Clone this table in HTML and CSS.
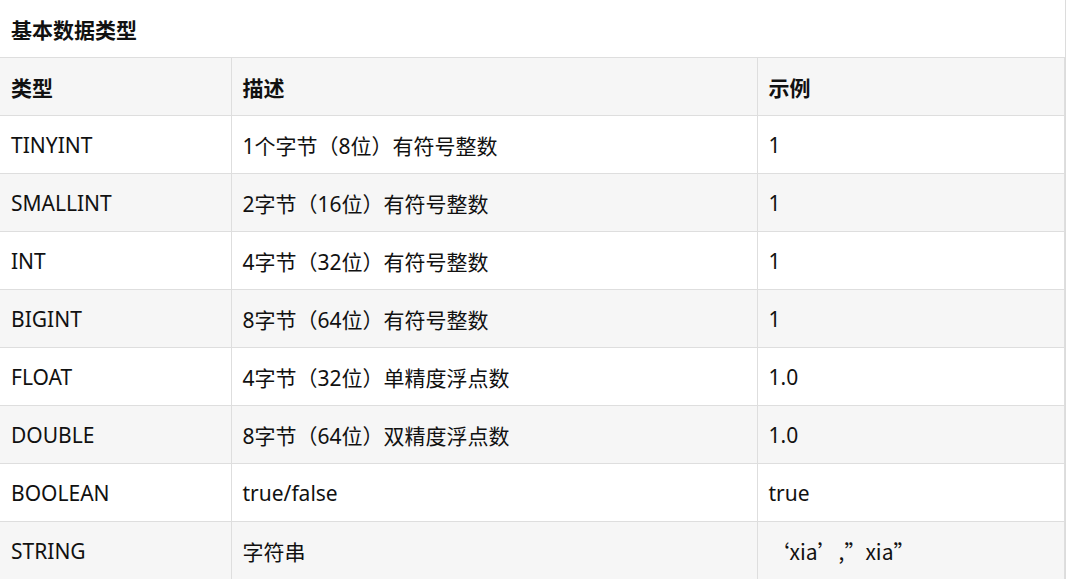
FILE: index.html
```html
<!DOCTYPE html>
<html lang="zh-CN">
<head>
<meta charset="utf-8">
<title>基本数据类型</title>
<link rel="stylesheet" href="styles.css">
</head>
<body>
<div class="page">
  <h3 class="title">基本数据类型</h3>
  <table class="types">
    <thead>
      <tr><th class="c1">类型</th><th class="c2">描述</th><th class="c3">示例</th></tr>
    </thead>
    <tbody>
      <tr><td>TINYINT</td><td>1个字节（8位）有符号整数</td><td>1</td></tr>
      <tr><td>SMALLINT</td><td>2字节（16位）有符号整数</td><td>1</td></tr>
      <tr><td>INT</td><td>4字节（32位）有符号整数</td><td>1</td></tr>
      <tr><td>BIGINT</td><td>8字节（64位）有符号整数</td><td>1</td></tr>
      <tr><td>FLOAT</td><td>4字节（32位）单精度浮点数</td><td>1.0</td></tr>
      <tr><td>DOUBLE</td><td>8字节（64位）双精度浮点数</td><td>1.0</td></tr>
      <tr><td>BOOLEAN</td><td>true/false</td><td>true</td></tr>
      <tr><td>STRING</td><td>字符串</td><td class="quote">‘xia’,”xia”</td></tr>
    </tbody>
  </table>
</div>
</body>
</html>
```

FILE: styles.css
```css
html, body {
  margin: 0;
  padding: 0;
  background: #ffffff;
}
body {
  font-family: "Noto Sans", "Noto Sans CJK SC", sans-serif;
  color: #111;
  font-size: 21px;
}
.page {
  width: 1066px;
  min-height: 579px;
  border-right: 1px solid #dcdcdc;
  box-sizing: border-box;
}
.title {
  margin: 0;
  height: 57px;
  padding-left: 11px;
  display: flex;
  align-items: center;
  font-size: 21px;
  font-weight: 700;
  color: #111;
}
.types {
  border-collapse: collapse;
  width: 1065px;
  table-layout: fixed;
}
.types th, .types td {
  height: 58px;
  padding: 0 11px;
  border: 1px solid #dedede;
  text-align: left;
  vertical-align: middle;
  white-space: nowrap;
  box-sizing: border-box;
}
.types tr > :first-child { border-left: none; }
.types th {
  font-weight: 700;
  background: #f6f6f6;
}
.c1 { width: 231px; }
.c2 { width: 526px; }
.types tbody tr:nth-child(even) td { background: #f6f6f6; }
.quote { font-family: "Noto Sans CJK SC", sans-serif; }
```
